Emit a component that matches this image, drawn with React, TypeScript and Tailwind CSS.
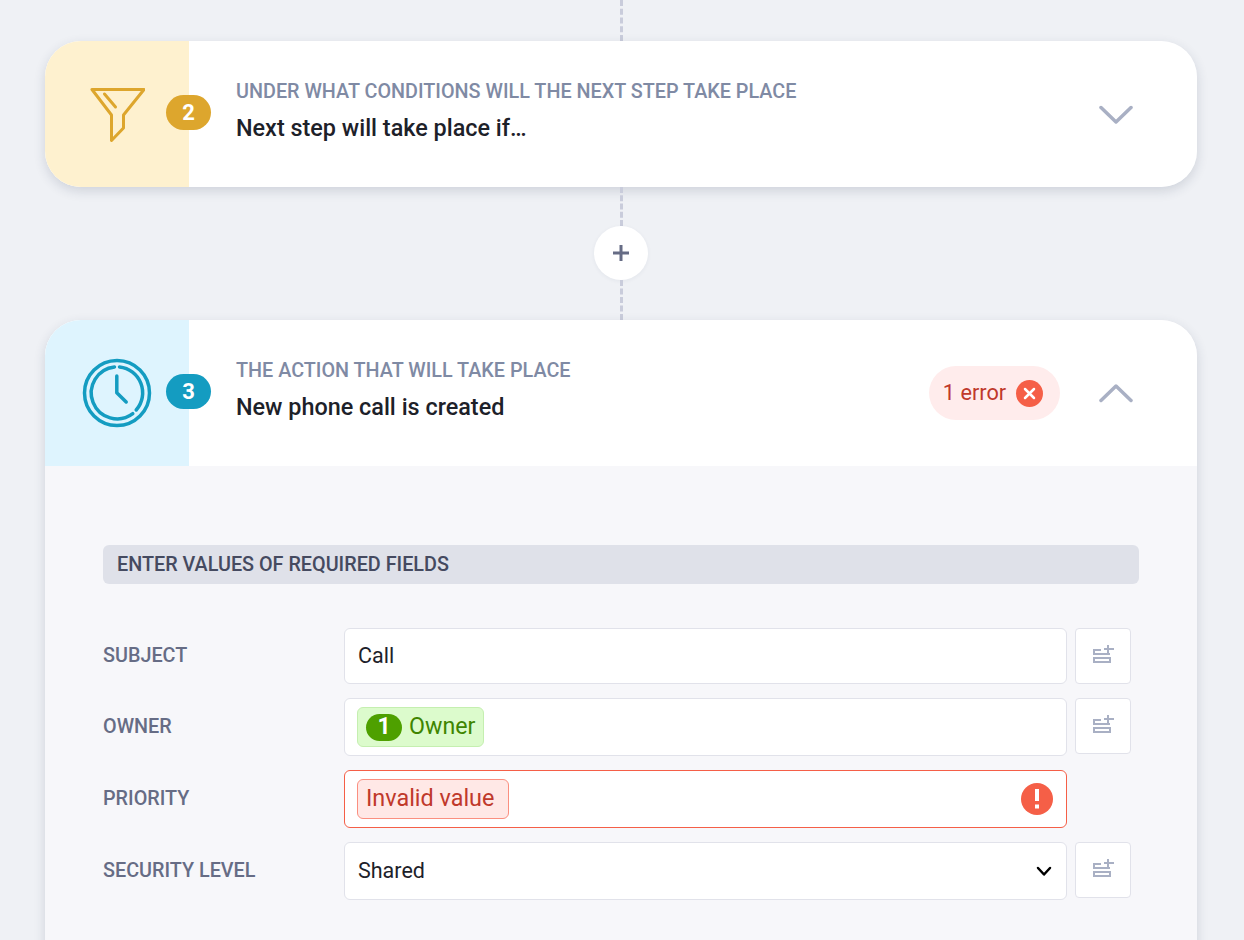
import { ReactNode } from 'react';

function Connector({ className }: { className: string }) {
  return <div className={`w-[3px] mx-auto border-l-[3px] border-dashed border-[#c9ccdb] ${className}`} />;
}

function StepBadge({ n, className }: { n: number; className: string }) {
  return (
    <div className={`absolute left-[121px] top-[54px] w-[45px] h-[35px] rounded-full flex items-center justify-center text-white text-[22px] font-bold ${className}`}>
      {n}
    </div>
  );
}

function FunnelIcon() {
  return (
    <svg width="56" height="56" viewBox="0 0 56 56" fill="none" stroke="#dda62d" strokeWidth="3" strokeLinejoin="round" strokeLinecap="round">
      <path d="M3 3.500H55L34.500 29V42L22.500 54.500V29Z" />
      <path d="M15.500 8L26.500 21" />
    </svg>
  );
}

function ClockIcon() {
  return (
    <svg width="70" height="70" viewBox="0 0 70 70" fill="none" stroke="#149cc1" strokeLinecap="round">
      <circle cx="35" cy="35" r="32.500" strokeWidth="3.500" />
      <path d="M32.500 9A26 26 0 1 0 50.800 55.700" strokeWidth="3.500" />
      <path d="M37.500 9A26 26 0 0 1 54.200 52" strokeWidth="3.500" />
      <path d="M34.800 18V34.700L44.200 44" strokeWidth="3.500" strokeLinejoin="round" />
    </svg>
  );
}

function Chevron({ up, className }: { up?: boolean; className: string }) {
  return (
    <svg className={className} viewBox="0 0 34 20" fill="none" stroke="#a9b0c4" strokeWidth="3.500" strokeLinecap="round" strokeLinejoin="round">
      <path d={up ? 'M2 17.500L17 3L32 17.500' : 'M2 2.500L17 17L32 2.500'} />
    </svg>
  );
}

function StepHeader(props: { panel: string; icon: ReactNode; badge: ReactNode; label: string; title: string; right: ReactNode }) {
  return (
    <div className="relative flex h-[146px] bg-white">
      <div className={`w-[144px] flex items-center justify-center ${props.panel}`}>{props.icon}</div>
      {props.badge}
      <div className="pl-[47px] flex-1 pt-[37px]">
        <div className="text-[19.8px] leading-[28px] font-medium uppercase text-[#7f8aa4]">{props.label}</div>
        <div className="mt-[8px] text-[23.4px] leading-[28px] font-medium text-[#1d2129]">{props.title}</div>
      </div>
      {props.right}
    </div>
  );
}

function AddFieldButton() {
  return (
    <button className="w-[56px] h-[56px] bg-white border border-[#e1e2ea] rounded-[4px] flex items-center justify-center">
      <svg className="-translate-y-[2px]" width="21" height="18" viewBox="0 0 21 18" fill="none" stroke="#a9b0c4" strokeWidth="2">
        <path d="M8 5H1V9H17" />
        <rect x="1" y="13" width="16" height="4" />
        <path d="M15 0V8M11 4H21" />
      </svg>
    </button>
  );
}

function Row({ label, h, children, add = true }: { label: string; h: string; children: ReactNode; add?: boolean }) {
  return (
    <div className="flex">
      <div className={`w-[241px] flex items-center text-[19.8px] font-medium uppercase text-[#666c85] ${h}`}>{label}</div>
      <div className={`w-[723px] ${h}`}>{children}</div>
      {add && <div className="ml-[8px]"><AddFieldButton /></div>}
    </div>
  );
}

export default function App() {
  return (
    <div className="h-[940px] overflow-hidden bg-[#eff1f5] font-['Roboto',sans-serif]">
      <div className="w-[1242px]">
        <Connector className="h-[41px]" />
        <div className="mx-[45px] rounded-[36px] overflow-hidden shadow-[0_4px_12px_rgba(40,50,80,0.16)]">
          <StepHeader
            panel="bg-[#fef1cf]"
            icon={<FunnelIcon />}
            badge={<StepBadge n={2} className="bg-[#dda62d]" />}
            label="Under what conditions will the next step take place"
            title="Next step will take place if…"
            right={<Chevron className="w-[34px] h-[20px] mt-[64px] mr-[64px]" />}
          />
        </div>
        <Connector className="h-[39px]" />
        <div className="mx-auto w-[54px] h-[54px] rounded-full bg-white flex items-center justify-center shadow-[0_1px_4px_rgba(40,50,80,0.06)]">
          <svg width="18" height="18" viewBox="0 0 18 18" stroke="#666c85" strokeWidth="3">
            <path d="M9 1V17M1 9H17" />
          </svg>
        </div>
        <Connector className="h-[40px]" />
        <div className="mx-[45px] rounded-t-[36px] overflow-hidden shadow-[0_4px_12px_rgba(40,50,80,0.16)] bg-[#f7f7fa] h-[700px]">
          <StepHeader
            panel="bg-[#def4fe]"
            icon={<ClockIcon />}
            badge={<StepBadge n={3} className="bg-[#149cc1]" />}
            label="The action that will take place"
            title="New phone call is created"
            right={
              <div className="flex items-start">
                <div className="mt-[46px] w-[131px] h-[54px] pr-[3px] rounded-full bg-[#ffecec] flex items-center justify-center gap-[10px] text-[21.7px] text-[#c0392b]">
                  <span>1 error</span>
                  <span className="w-[27px] h-[27px] rounded-full bg-[#f55f47] flex items-center justify-center">
                    <svg width="13" height="13" viewBox="0 0 13 13" stroke="white" strokeWidth="2.500" strokeLinecap="round">
                      <path d="M2 2L11 11M11 2L2 11" />
                    </svg>
                  </span>
                </div>
                <Chevron up className="w-[34px] h-[20px] mt-[63px] ml-[39px] mr-[64px]" />
              </div>
            }
          />
          <div className="px-[58px] pt-[79px]">
            <div className="h-[39px] rounded-[6px] bg-[#dfe1e9] pl-[14px] pt-[1px] flex items-center text-[19.8px] font-medium uppercase text-[#454a60]">
              Enter values of required fields
            </div>
            <div className="mt-[44px] flex flex-col gap-[14px]">
              <Row label="Subject" h="h-[56px]">
                <div className="h-full bg-white border border-[#e1e2ea] rounded-[6px] pl-[13px] flex items-center text-[21.5px] text-[#1d2129]">Call</div>
              </Row>
              <Row label="Owner" h="h-[58px]">
                <div className="h-full bg-white border border-[#e1e2ea] rounded-[6px] pl-[12px] flex items-center">
                  <span className="h-[40px] pl-[8px] pr-[8px] rounded-[6px] bg-[#dcfbcc] border border-[#c5efb0] flex items-center gap-[7px] text-[23.2px] text-[#3f8500]">
                    <span className="w-[36px] h-[27px] rounded-full bg-[#4ea000] text-white font-bold text-[23px] flex items-center justify-center">1</span>
                    <span className="-translate-y-[1px]">Owner</span>
                  </span>
                </div>
              </Row>
              <Row label="Priority" h="h-[58px]" add={false}>
                <div className="h-full bg-white border border-[#f55f47] rounded-[6px] pl-[12px] pr-[13px] flex items-center justify-between">
                  <span className="h-[40px] pl-[8px] pr-[14px] rounded-[6px] bg-[#ffe8e6] border border-[#fb8f80] flex items-center text-[23.4px] text-[#c0392b]">Invalid value</span>
                  <span className="w-[32px] h-[32px] rounded-full bg-[#f55f47] flex items-center justify-center text-white">
                    <svg width="6" height="20" viewBox="0 0 6 20" fill="white">
                      <rect x="1" y="0" width="4" height="12" />
                      <rect x="1" y="15.500" width="4" height="4" />
                    </svg>
                  </span>
                </div>
              </Row>
              <Row label="Security level" h="h-[58px]">
                <div className="h-full bg-white border border-[#e1e2ea] rounded-[6px] pl-[13px] pr-[14px] flex items-center justify-between text-[21.5px] text-[#1d2129]">
                  Shared
                  <svg width="16" height="11" viewBox="0 0 16 11" fill="none" stroke="#000" strokeWidth="2.500" strokeLinecap="round" strokeLinejoin="round">
                    <path d="M2 2L8 8.500L14 2" />
                  </svg>
                </div>
              </Row>
            </div>
          </div>
        </div>
      </div>
    </div>
  );
}
